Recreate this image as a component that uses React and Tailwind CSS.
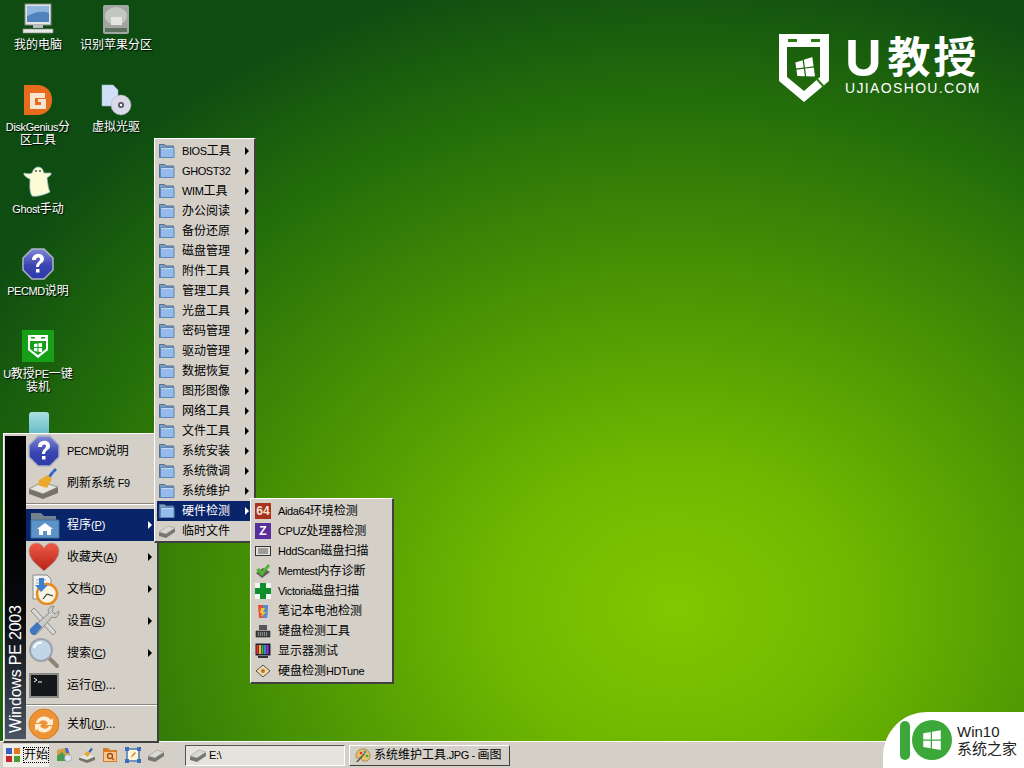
// latin runs are set a bit smaller and tighter than the CJK, like the Tahoma in the screenshot
const T = ({ children }) =>
  children.split(/([A-Za-z0-9 .:\\()\-]+)/).map((part, i) =>
    i % 2 ? (
      <span key={i} className="text-[11px] tracking-[-0.4px]">{part}</span>
    ) : (
      part
    )
  );

const Arrow = ({ light }) => (
  <span className={`w-0 h-0 border-y-[4px] border-y-transparent border-l-[4px] ${light ? "border-l-white" : "border-l-black"}`}></span>
);

const Folder = ({ size = 16 }) => (
  <svg width={size} height={size} viewBox="0 0 16 16">
    <path d="M0.5 1.5h5l1.5 1.5h7.500v11.500h-14z" fill="#7f9dbd" stroke="#4f6f94" strokeWidth="1" />
    <path d="M1.500 4.500h13.500v10h-13.500z" fill="#94bbea" stroke="#5d87b8" strokeWidth="1" />
    <path d="M2.500 5.500h11.500" stroke="#c4daf4" strokeWidth="1" />
  </svg>
);

const GrayDisk = ({ size = 16 }) => (
  <svg width={size} height={size} viewBox="0 0 16 16">
    <path d="M0 10l9-6 7 2v3l-9 6-7-2z" fill="#77766f" />
    <path d="M0 9l9-6 7 2-9 6z" fill="#d8d8d4" stroke="#8f8f8a" strokeWidth="0.500" />
  </svg>
);

const WinFlag = ({ size = 16, fill = "#fff" }) => (
  <svg width={size} height={size} viewBox="0 0 16 16">
    <path d="M1 2.500l6-1v6H1zM8 1.300l7-1.200v7.400H8zM1 8.500h6v6l-6-1zM8 8.500h7v7.400l-7-1.200z" fill={fill} />
  </svg>
);

const HelpIcon = ({ size = 32 }) => (
  <svg width={size} height={size} viewBox="0 0 32 32">
    <defs>
      <linearGradient id="helpFill" x1="0" y1="0" x2="0" y2="1">
        <stop offset="0" stopColor="#7f88d8" />
        <stop offset="0.55" stopColor="#3a46b0" />
        <stop offset="1" stopColor="#2c3aa8" />
      </linearGradient>
    </defs>
    <path d="M10 1h12l9 9v12l-9 9H10l-9-9V10z" fill="url(#helpFill)" stroke="#aeb2c4" strokeWidth="1.500" />
    <path d="M10 12c0-8 12-8 12-1 0 4-5 4-5 8h-3c0-5 4-5 4-8 0-2-4-2-4 1z" fill="#fff" />
    <rect x="14" y="21" width="3.500" height="3.500" fill="#fff" />
  </svg>
);

const BroomDisk = () => (
  <svg width="32" height="32" viewBox="0 0 32 32">
    <path d="M1 23l13-7 16 5v5l-15 6-14-5z" fill="#77736a" />
    <path d="M1 22l13-7 16 5-15 7z" fill="#e6e4dc" stroke="#77736a" strokeWidth="0.700" />
    <path d="M20 9l4-5 2 2-4 5z" fill="#2f62c8" />
    <path d="M24 4l3-3 2 2-3 3z" fill="#2f62c8" />
    <path d="M11 13l9-5 4 4-5 9-9-3z" fill="#e8a92e" />
  </svg>
);

const HomeFolder = () => (
  <svg width="32" height="32" viewBox="0 0 32 32">
    <path d="M3 4h10l3 3h12v20H3z" fill="#75818f" />
    <path d="M3 11h28v18H3z" fill="#5d93c8" stroke="#3e6d9e" strokeWidth="1" />
    <path d="M17 14l8 6h-2v6h-4v-4h-4v4h-4v-6H9z" fill="#fff" />
  </svg>
);

const HeartIcon = () => (
  <svg width="32" height="32" viewBox="0 0 32 32">
    <defs>
      <linearGradient id="heartFill" x1="0" y1="0" x2="0" y2="1">
        <stop offset="0" stopColor="#ee5a48" />
        <stop offset="1" stopColor="#b62316" />
      </linearGradient>
    </defs>
    <path d="M16 30C8 23 1 18 1 10c0-9 11-11 15-3 4-8 15-6 15 3 0 8-7 13-15 20z" fill="url(#heartFill)" stroke="#a8a49a" strokeWidth="0.800" />
  </svg>
);

const DocClock = () => (
  <svg width="32" height="32" viewBox="0 0 32 32">
    <path d="M5 2h14l4 4v20H5z" fill="#f3f3f0" stroke="#88888a" />
    <path d="M8 7h10M8 10h6" stroke="#9aa" />
    <circle cx="19" cy="21" r="10" fill="#f7f3e3" stroke="#e88a1d" strokeWidth="2.500" />
    <path d="M19 21l6 2M19 21l-4 5" stroke="#333" strokeWidth="1.200" />
    <path d="M11 5h5v7h4l-7 7-6-7h4z" fill="#3e7fd0" />
  </svg>
);

const ToolsIcon = () => (
  <svg width="32" height="32" viewBox="0 0 32 32">
    <path d="M6 3l22 24-3 3L3 6z" fill="#d8d8d4" stroke="#8a8a86" />
    <path d="M26 1c-5 0-7 4-5 7L3 24l1 5 5 0 15-17c4 2 7-1 7-6l-4 3-3-3z" fill="#c9c9c5" stroke="#8a8a86" />
    <path d="M2 24l7-7 5 5-7 8c-3 1-6-3-5-6z" fill="#3f76bc" />
  </svg>
);

const SearchIcon = () => (
  <svg width="32" height="32" viewBox="0 0 32 32">
    <path d="M20 20l9 9" stroke="#8a8378" strokeWidth="4" strokeLinecap="round" />
    <circle cx="13" cy="13" r="11" fill="#c2d6ea" stroke="#9ba3ad" strokeWidth="2" />
    <path d="M6 11c1-4 5-6 8-5" stroke="#fff" strokeWidth="2" fill="none" />
  </svg>
);

const TermIcon = () => (
  <svg width="32" height="32" viewBox="0 0 32 32">
    <rect x="1" y="4" width="30" height="25" fill="#8a8a86" />
    <rect x="3" y="6" width="26" height="21" fill="#15171a" />
    <path d="M6 9l3 2-3 2M10 13h4" stroke="#fff" strokeWidth="1" fill="none" />
  </svg>
);

const RefreshIcon = () => (
  <svg width="32" height="32" viewBox="0 0 32 32">
    <circle cx="16" cy="16" r="15" fill="#ee9236" stroke="#d87c1e" />
    <path d="M8 15c1-7 11-9 15-3l2-2v7h-7l2-2c-3-4-8-3-9 0zM24 18c-1 7-11 9-15 3l-2 2v-7h7l-2 2c3 4 8 3 9 0z" fill="#fbeed7" />
  </svg>
);

const PcIcon = () => (
  <svg width="32" height="32" viewBox="0 0 32 32">
    <rect x="3" y="1" width="26" height="21" fill="#e4e6e6" stroke="#7f8a8a" />
    <rect x="5" y="3" width="22" height="16" fill="#4f83bd" />
    <path d="M5 3h22v7c-8-3-15 0-22 3z" fill="#8fb6de" />
    <rect x="11" y="22" width="10" height="3" fill="#b9bdbd" />
    <path d="M1 26h30v4H1z" fill="#e6e8e6" stroke="#8a8f8f" strokeWidth="0.700" />
  </svg>
);

const HddIcon = () => (
  <svg width="32" height="32" viewBox="0 0 32 32">
    <rect x="3" y="2" width="26" height="29" rx="2" fill="#a3a5a3" />
    <ellipse cx="16" cy="13" rx="11" ry="9" fill="#c4c6c4" />
    <rect x="11" y="14" width="11" height="8" fill="#e4e4e2" />
    <rect x="5" y="25" width="22" height="4" fill="#5f6f5f" />
  </svg>
);

const DgIcon = () => (
  <svg width="32" height="32" viewBox="0 0 32 32">
    <path d="M2 1h13c10 0 15 7 15 15s-5 15-15 15H2z" fill="#e96b1d" />
    <path d="M8 9h15v5H13v7h6v-3h-3v-3h8v10H8z" fill="#f7e5d0" />
  </svg>
);

const CdIcon = () => (
  <svg width="32" height="32" viewBox="0 0 32 32">
    <path d="M2 1h11l5 5v16H2z" fill="#cfe0f6" stroke="#a3b6d0" strokeWidth="0.600" />
    <circle cx="21" cy="21" r="10" fill="#d9d9ea" stroke="#b0b0c4" strokeWidth="0.500" />
    <circle cx="21" cy="21" r="3" fill="#555" />
    <circle cx="21" cy="21" r="1.200" fill="#fff" />
  </svg>
);

const GhostIcon = () => (
  <svg width="32" height="32" viewBox="0 0 32 32">
    <path d="M16 1c4 0 5 3 6 6l7 0c1 2-3 4-4 5 1 6 1 10 3 14-6 3-13 5-18 4C7 25 8 18 8 13 5 12 1 9 2 7c3 1 6 1 8 0 1-3 3-6 6-6z" fill="#fbfcd6" stroke="#8fb6c8" strokeWidth="0.800" />
    <circle cx="14" cy="5" r="1" fill="#555" />
    <circle cx="18" cy="5" r="1" fill="#555" />
  </svg>
);

const UShield = ({ size = 32 }) => (
  <svg width={size} height={size} viewBox="0 0 32 32">
    <rect width="32" height="32" fill="#17a017" />
    <path fillRule="evenodd" d="M6 5h20v15l-10 8-10-8zM8 11v8l8 6 8-6v-8z" fill="#fff" />
    <rect x="9" y="7" width="4" height="1.500" fill="#17a017" />
    <rect x="19" y="7" width="4" height="1.500" fill="#17a017" />
    <path d="M12 14l3.500-.5v3.500H12zM16.500 13.300l3.500-.5v4.200h-3.500zM12 18h3.500v3.500l-3.500-.5zM16.500 18h3.500v4.200l-3.500-.5z" fill="#fff" />
  </svg>
);

const BlockIcon = ({ bg, color, children }) => (
  <span className={`w-4 h-4 flex items-center justify-center text-[12px] font-bold leading-none ${bg} ${color}`}>{children}</span>
);

const HddScanIcon = () => (
  <svg width="16" height="16" viewBox="0 0 16 16">
    <rect x="0.500" y="3.500" width="15" height="9" fill="#e4e2dc" stroke="#333" />
    <path d="M3 6h10M3 8h10M3 10h10" stroke="#555" />
  </svg>
);

const MemIcon = () => (
  <svg width="16" height="16" viewBox="0 0 16 16">
    <path d="M1 10l7-5 7 4-8 6z" fill="#5f5f55" />
    <path d="M1 7l3-2 3 3 6-7 2 2-8 10z" fill="#4fb43a" />
  </svg>
);

const CrossIcon = () => (
  <svg width="16" height="16" viewBox="0 0 16 16">
    <rect width="16" height="16" fill="#f4f4f0" />
    <path d="M5 0h6v5h5v6h-5v5H5v-5H0V5h5z" fill="#0f8f2c" />
  </svg>
);

const BatteryIcon = () => (
  <svg width="16" height="16" viewBox="0 0 16 16">
    <path d="M3 2h10l-1 13H4z" fill="#e5502f" />
    <path d="M8 2h5l-1 13H8z" fill="#4f8fd8" />
    <path d="M6 5h4l-2 4h3l-5 5 1-4H5z" fill="#f6c63a" />
  </svg>
);

const KeyboardIcon = () => (
  <svg width="16" height="16" viewBox="0 0 16 16">
    <path d="M4 2h8v5H4z" fill="#555" />
    <path d="M1 8h14v6H1z" fill="#3f4244" stroke="#222" strokeWidth="0.600" />
    <path d="M3 10h10M3 12h10" stroke="#d0d0d0" strokeDasharray="1 1" />
  </svg>
);

const MonitorIcon = () => (
  <svg width="16" height="16" viewBox="0 0 16 16">
    <rect x="0.500" y="0.500" width="15" height="12" fill="#1d1d38" />
    <path d="M2.500 2v9" stroke="#e33" strokeWidth="2" />
    <path d="M5 2v9" stroke="#eb3" strokeWidth="2" />
    <path d="M7.500 2v9" stroke="#3b4" strokeWidth="2" />
    <path d="M10 2v9" stroke="#38d" strokeWidth="2" />
    <path d="M12.500 2v9" stroke="#a3c" strokeWidth="2" />
    <rect x="3" y="13" width="10" height="2" fill="#333" />
  </svg>
);

const TuneIcon = () => (
  <svg width="16" height="16" viewBox="0 0 16 16">
    <path d="M8 2l7 6-7 6-7-6z" fill="#f0d8a8" stroke="#555" />
    <circle cx="8" cy="8" r="2" fill="#b8742c" />
  </svg>
);

const StartLogo = () => (
  <svg width="14" height="14" viewBox="0 0 14 14">
    <rect x="0" y="0" width="6" height="6" fill="#3a5fc0" />
    <rect x="8" y="0" width="6" height="6" fill="#e07820" />
    <rect x="0" y="8" width="6" height="6" fill="#c82828" />
    <rect x="8" y="8" width="6" height="6" fill="#4a9a30" />
  </svg>
);

const PaintIcon = () => (
  <svg width="18" height="16" viewBox="0 0 16 16">
    <path d="M1 9c0-5 5-8 9-7 4 1 5 5 5 8s-4 5-7 4c-2-1-1-3-3-3-2 0-4 1-4-2z" fill="#e6c26a" stroke="#7a6230" strokeWidth="0.600" />
    <circle cx="6" cy="6" r="1.300" fill="#d33" />
    <circle cx="10" cy="5" r="1.300" fill="#38c" />
    <circle cx="12" cy="9" r="1.300" fill="#3a3" />
    <path d="M1 15l8-9 1 1-7 8z" fill="#555" />
  </svg>
);

const QuickA = () => (
  <svg width="16" height="16" viewBox="0 0 16 16">
    <path d="M1 3l8-2 5 5v8H1z" fill="#d8a040" />
    <path d="M1 9l5-4 4 5 4-3v7H1z" fill="#4a9a50" />
    <circle cx="12" cy="11" r="3.500" fill="#dfe4f2" stroke="#889" strokeWidth="0.500" />
    <path d="M9 1l3 0 1 5-3 0z" fill="#3a70c8" />
  </svg>
);

const QuickBroom = () => (
  <svg width="16" height="16" viewBox="0 0 16 16">
    <path d="M0 11l7-4 9 3v3l-8 3-8-3z" fill="#77736a" />
    <path d="M0 10.500l7-4 9 3-8 3.500z" fill="#e6e4dc" />
    <path d="M9 5l3-4 2 1-3 4z" fill="#2f62c8" />
    <path d="M5 7l4-3 2 2-2 4z" fill="#e8a92e" />
  </svg>
);

const QuickFolder = () => (
  <svg width="16" height="16" viewBox="0 0 16 16">
    <path d="M1 1h5l2 2h7v12H1z" fill="#d97c28" />
    <rect x="2" y="5" width="12" height="9" fill="#f6c78e" />
    <circle cx="8" cy="9" r="2.500" fill="none" stroke="#a04a10" strokeWidth="1.300" />
    <path d="M10 11l2 2" stroke="#a04a10" strokeWidth="1.300" />
  </svg>
);

const QuickShot = () => (
  <svg width="16" height="16" viewBox="0 0 16 16">
    <rect x="2" y="2" width="12" height="12" fill="#fbf4d8" stroke="#4a7ab8" strokeWidth="1.500" />
    <rect x="0" y="0" width="4" height="4" fill="#3a70b8" />
    <rect x="12" y="0" width="4" height="4" fill="#3a70b8" />
    <rect x="0" y="12" width="4" height="4" fill="#3a70b8" />
    <rect x="12" y="12" width="4" height="4" fill="#3a70b8" />
    <path d="M6 11l1-3 3-3 1 1-3 3z" fill="#c8871c" />
  </svg>
);

const desktopIcons = [
  { icon: <PcIcon />, lines: ["我的电脑"], x: 0, y: 3, gap: "mt-[4px]" },
  { icon: <HddIcon />, lines: ["识别苹果分区"], x: 78, y: 3, gap: "mt-[4px]" },
  { icon: <DgIcon />, lines: ["DiskGenius分", "区工具"], x: 0, y: 84, gap: "mt-[5px]" },
  { icon: <CdIcon />, lines: ["虚拟光驱"], x: 78, y: 84, gap: "mt-[5px]" },
  { icon: <GhostIcon />, lines: ["Ghost手动"], x: 0, y: 166, gap: "mt-[5px]" },
  { icon: <HelpIcon />, lines: ["PECMD说明"], x: 0, y: 248, gap: "mt-[5px]" },
  { icon: <UShield />, lines: ["U教授PE一键", "装机"], x: 0, y: 330, gap: "mt-[6px]" },
];

const startTop = [
  { icon: <HelpIcon />, label: "PECMD说明" },
  { icon: <BroomDisk />, label: "刷新系统 F9" },
];

const startMid = [
  { icon: <HomeFolder />, label: "程序", hotkey: "P", arrow: true, active: true },
  { icon: <HeartIcon />, label: "收藏夹", hotkey: "A", arrow: true },
  { icon: <DocClock />, label: "文档", hotkey: "D", arrow: true },
  { icon: <ToolsIcon />, label: "设置", hotkey: "S", arrow: true },
  { icon: <SearchIcon />, label: "搜索", hotkey: "C", arrow: true },
  { icon: <TermIcon />, label: "运行", hotkey: "R", dots: true },
];

const folders = [
  "BIOS工具", "GHOST32", "WIM工具", "办公阅读", "备份还原", "磁盘管理", "附件工具",
  "管理工具", "光盘工具", "密码管理", "驱动管理", "数据恢复", "图形图像", "网络工具",
  "文件工具", "系统安装", "系统微调", "系统维护", "硬件检测",
];

const hardware = [
  { icon: <BlockIcon bg="bg-[#a8321e]" color="text-[#f4e4d0]">64</BlockIcon>, label: "Aida64环境检测" },
  { icon: <BlockIcon bg="bg-[#5a2f9c]" color="text-white">Z</BlockIcon>, label: "CPUZ处理器检测" },
  { icon: <HddScanIcon />, label: "HddScan磁盘扫描" },
  { icon: <MemIcon />, label: "Memtest内存诊断" },
  { icon: <CrossIcon />, label: "Victoria磁盘扫描" },
  { icon: <BatteryIcon />, label: "笔记本电池检测" },
  { icon: <KeyboardIcon />, label: "键盘检测工具" },
  { icon: <MonitorIcon />, label: "显示器测试" },
  { icon: <TuneIcon />, label: "硬盘检测HDTune" },
];

const menuBox = "bg-[#d4d0c8] border-t border-l border-t-white border-l-white border-r-2 border-b-2 border-r-[#404040] border-b-[#404040]";

const StartRow = ({ item }) => (
  <div className={`h-8 shrink-0 flex items-center pl-[2px] pr-[5px] ${item.active ? "bg-[#0a246a] text-white" : "text-black"}`}>
    <span className="w-8 h-8 shrink-0">{item.icon}</span>
    <span className="ml-[7px] flex-1">
      <T>{item.label}</T>
      {item.hotkey && (
        <span className="text-[11px] tracking-[-0.2px]">
          (<span className="underline">{item.hotkey}</span>)
        </span>
      )}
      {item.dots && "..."}
    </span>
    {item.arrow && <Arrow light={item.active} />}
  </div>
);

const SubRow = ({ icon, label, arrow, active }) => (
  <div className={`h-5 flex items-center pl-[2px] pr-[4px] ${active ? "bg-[#0a246a] text-white" : "text-black"}`}>
    <span className="w-4 h-4 shrink-0 flex items-center justify-center">{icon}</span>
    <span className="ml-[7px] flex-1 whitespace-nowrap"><T>{label}</T></span>
    {arrow && <Arrow light={active} />}
  </div>
);

const QuickIcons = [<QuickA key="a" />, <QuickBroom key="b" />, <QuickFolder key="c" />, <QuickShot key="d" />, <GrayDisk key="e" />];

export default function App() {
  return (
    <div className="relative w-[1024px] h-[768px] overflow-hidden flex flex-col font-['Liberation_Sans','Noto_Sans_CJK_SC',sans-serif] text-[12px] leading-[14px]">
      <div className="relative flex-1 bg-[radial-gradient(ellipse_78%_88%_at_66%_82%,#80c800_0%,#70b800_22%,#4a9404_50%,#246e0a_78%,#0e4c12_100%)]">
        {desktopIcons.map((d) => (
          <div key={d.lines[0]} className="absolute w-[76px] flex flex-col items-center" style={{ left: d.x, top: d.y }}>
            <span className="w-8 h-8">{d.icon}</span>
            <div className={`${d.gap} text-center text-white [text-shadow:1px_1px_1px_#000] leading-[13px] whitespace-nowrap`}>
              {d.lines.map((line) => (
                <div key={line}><T>{line}</T></div>
              ))}
            </div>
          </div>
        ))}
        <div className="absolute left-[29px] top-[412px] w-5 h-6 bg-gradient-to-b from-[#a8e0e4] to-[#5fb8c4] rounded-t-[3px]"></div>

        {/* logo */}
        <div className="absolute left-[779px] top-[34px] flex text-white">
          <svg width="50" height="68" viewBox="0 0 50 68">
            <path fillRule="evenodd" fill="#fff" d="M0 0H50V47L25 68L0 47ZM8 13V43L25 57L41 43V13Z" />
            <rect x="9" y="5" width="9" height="3" fill="#2c7a10" />
            <rect x="32" y="5" width="9" height="3" fill="#2c7a10" />
            <path d="M37 44L45 53" stroke="#2c7a10" strokeWidth="2" />
            <g transform="translate(16 24) rotate(-8 10 10)"><WinFlag size={20} /></g>
          </svg>
          <div className="ml-[16px] mt-[2px] flex flex-col">
            <div className="flex items-center h-[44px] font-bold">
              <span className="text-[50px] leading-[44px] font-['Inter',sans-serif]">U</span>
              <span className="ml-[6px] text-[43px] leading-[44px] tracking-[3px] whitespace-nowrap">教授</span>
            </div>
            <span className="mt-[1px] text-[14px] leading-[14px] tracking-[1.350px] whitespace-nowrap">UJIAOSHOU.COM</span>
          </div>
        </div>

        {/* start menu */}
        <div className={`absolute left-[3px] top-[433px] w-[156px] h-[310px] flex pt-[2px] pl-[1px] pb-[2px] ${menuBox}`}>
          <div className="w-[21px] shrink-0 flex items-center justify-center bg-gradient-to-b from-black via-[#0a0c10] via-60% to-[#4a5666]">
            <span className="[writing-mode:vertical-rl] rotate-180 text-white text-[16px] leading-none tracking-[-0.2px] whitespace-nowrap pt-[6px] h-full">Windows PE 2003</span>
          </div>
          <div className="flex-1 flex flex-col -mt-[1px]">
            {startTop.map((i) => (
              <StartRow key={i.label} item={i} />
            ))}
            <div className="h-[10px] shrink-0 flex items-center"><div className="w-full h-[2px] border-t border-t-[#8a8780] border-b border-b-white"></div></div>
            {startMid.map((i) => (
              <StartRow key={i.label} item={i} />
            ))}
            <div className="h-[7px] shrink-0 flex items-center"><div className="w-full h-[2px] border-t border-t-[#8a8780] border-b border-b-white"></div></div>
            <StartRow item={{ icon: <RefreshIcon />, label: "关机", hotkey: "U", dots: true }} />
          </div>
        </div>

        {/* programs menu */}
        <div className={`absolute left-[154px] top-[138px] w-[102px] pt-[2px] pl-[2px] pr-[1px] ${menuBox}`}>
          {folders.map((f) => (
            <SubRow key={f} icon={<Folder />} label={f} arrow active={f === "硬件检测"} />
          ))}
          <SubRow icon={<GrayDisk />} label="临时文件" />
        </div>

        {/* hardware menu */}
        <div className={`absolute left-[250px] top-[498px] w-[144px] pt-[2px] pl-[2px] pr-[1px] pb-[1px] ${menuBox}`}>
          {hardware.map((h) => (
            <SubRow key={h.label} icon={h.icon} label={h.label} />
          ))}
        </div>
      </div>

      {/* taskbar */}
      <div className="h-[27px] shrink-0 bg-[#d4d0c8] border-t border-t-white flex items-center pl-[3px]">
        <div className="w-[46px] h-[23px] bg-[#efede8] flex items-center pl-[3px] gap-[4px]">
          <StartLogo />
          <span className="text-[12px] text-black outline-1 outline-dotted outline-black">开始</span>
        </div>
        <div className="ml-[7px] flex items-center gap-[7px]">
          {QuickIcons.map((q, i) => (
            <span key={i} className="w-4 h-4">{q}</span>
          ))}
        </div>
        <div className="ml-[21px] flex items-center gap-[4px]">
          <div className="w-[160px] h-[21px] bg-[#e6e3dd] border-t border-l border-t-[#555] border-l-[#555] border-r border-b border-r-white border-b-white flex items-center pl-1 gap-[3px]">
            <GrayDisk />
            <span className="text-black"><T>E:\</T></span>
          </div>
          <div className="w-[161px] h-[21px] bg-[#d4d0c8] border-t border-l border-t-white border-l-white border-r border-b border-r-[#404040] border-b-[#404040] flex items-center pl-1 gap-[2px]">
            <PaintIcon />
            <span className="text-black whitespace-nowrap"><T>系统维护工具.JPG - 画图</T></span>
          </div>
        </div>
      </div>

      {/* site badge */}
      <div className="absolute right-0 bottom-0 w-[141px] h-[56px] bg-white rounded-tl-[44px] flex items-center pl-[17px]">
        <span className="w-[10px] h-[39px] rounded-full bg-[#3da83a]"></span>
        <span className="ml-[2px] w-[40px] h-[40px] rounded-full bg-[#3da83a] flex items-center justify-center"><WinFlag size={20} /></span>
        <div className="ml-[5px] flex flex-col text-[#222]">
          <span className="text-[15px] leading-[17px]">Win10</span>
          <span className="text-[15px] leading-[17px] whitespace-nowrap">系统之家</span>
        </div>
      </div>
    </div>
  );
}
